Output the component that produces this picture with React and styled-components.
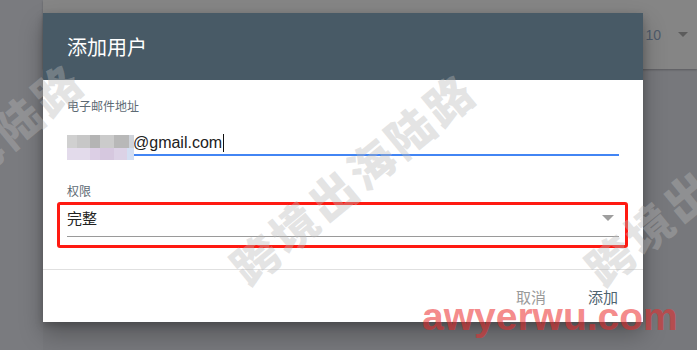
import styled, { createGlobalStyle } from 'styled-components';

const GlobalStyle = createGlobalStyle`
  html, body {
    margin: 0;
    padding: 0;
    background: #77787c;
  }
  * { box-sizing: border-box; }
`;

const CJK = `"Noto Sans CJK SC", "Liberation Sans", sans-serif`;

const Page = styled.div`
  position: relative;
  width: 697px;
  height: 350px;
  overflow: hidden;
  display: flex;
  background: #77787c;
  font-family: ${CJK};
`;

const LeftGutter = styled.div`
  width: 43px;
  flex-shrink: 0;
  background: #7a7b7f;
`;

const Content = styled.div`
  flex: 1;
  display: flex;
  flex-direction: column;
`;

const TableBar = styled.div`
  height: 69px;
  background: #858585;
  box-shadow: 0 1px 2px rgba(0, 0, 0, 0.25);
  display: flex;
  align-items: center;
  justify-content: flex-end;
  padding-right: 9px;
  gap: 17px;
  font-family: "Liberation Sans", Arial, sans-serif;
  font-size: 14px;
  color: #4e5a6a;
`;

const Caret = styled.span`
  width: 0;
  height: 0;
  border-left: ${p => p.$w / 2}px solid transparent;
  border-right: ${p => p.$w / 2}px solid transparent;
  border-top: ${p => p.$h}px solid ${p => p.$color};
`;

const Dialog = styled.div`
  position: absolute;
  left: 43px;
  top: 13px;
  width: 600px;
  background: #fff;
  box-shadow: 0 12px 22px rgba(0, 0, 0, 0.28), 0 3px 8px rgba(0, 0, 0, 0.2);
`;

const Header = styled.div`
  height: 67px;
  background: #485a66;
  color: #fff;
  font-size: 20px;
  display: flex;
  align-items: center;
  padding-left: 24px;
`;

const Body = styled.div`
  padding: 18px 24px 32px;
  border-bottom: 1px solid #e0e0e0;
`;

const Label = styled.div`
  font-size: 12px;
  line-height: 16px;
  color: #5d6a74;
  margin-top: ${p => p.$top || 0}px;
`;

const EmailField = styled.div`
  position: relative;
  margin-top: 19px;
  padding: 0 0 1px 66px;
  line-height: 20px;
  font-family: "Liberation Sans", Arial, sans-serif;
  font-size: 16px;
  color: #212121;
  border-bottom: 2px solid #4285f4;
  display: flex;
  align-items: center;
`;

const Mosaic = styled.span`
  position: absolute;
  left: 0;
  top: 2px;
  width: 67px;
  height: 25px;
  background:
    linear-gradient(to right,
      #d0d0d0 0 10px, #c7c7c7 10px 23px, #b4b4b4 23px 33px,
      #cbcbcb 33px 47px, #b8b8b8 47px 62px, #cfd3da 62px) top / 100% 13px no-repeat,
    linear-gradient(to right,
      #e3dbeb 0 23px, #dccfe5 23px 33px, #d6c8df 33px 47px,
      #dcd2e6 47px 60px, #d3def2 60px) bottom / 100% 12px no-repeat;
`;

const Cursor = styled.span`
  width: 1px;
  height: 18px;
  margin-left: 1px;
  background: #111;
`;

const SelectField = styled.div`
  position: relative;
  margin-top: 9px;
  padding-bottom: 8px;
  border-bottom: 1px solid #9a9a9a;
  display: flex;
  align-items: center;
  justify-content: space-between;
  padding-right: 5px;
  font-size: 15px;
  line-height: 20px;
  color: #222;
`;

const Highlight = styled.div`
  position: absolute;
  left: -10px;
  right: -9px;
  top: -6px;
  bottom: -12px;
  border: 3px solid #ff1a12;
  border-radius: 3px;
  pointer-events: none;
`;

const Actions = styled.div`
  height: 52px;
  display: flex;
  align-items: center;
  justify-content: flex-end;
  gap: 42px;
  padding-right: 25px;
`;

const ActionButton = styled.button`
  border: 0;
  background: none;
  padding: 0;
  font-family: ${CJK};
  font-size: 15px;
  color: ${p => (p.$primary ? '#4f6470' : '#9a9a9a')};
  cursor: pointer;
`;

const Watermarks = styled.div`
  position: absolute;
  inset: 0;
  pointer-events: none;
`;

const Stamp = styled.span`
  position: absolute;
  left: ${p => p.$x}px;
  top: ${p => p.$y}px;
  transform: translate(-50%, -50%) rotate(-39.5deg);
  white-space: nowrap;
  font-family: ${CJK};
  font-weight: 900;
  font-size: 46px;
  line-height: 46px;
  letter-spacing: 4px;
  color: rgba(184, 184, 184, 0.38);
`;

const SiteMark = styled.span`
  position: absolute;
  left: 422px;
  top: 297px;
  font-family: "Liberation Sans", Arial, sans-serif;
  font-weight: 700;
  font-size: 39px;
  line-height: 39px;
  color: rgba(236, 40, 40, 0.55);
  white-space: nowrap;
`;

const stamps = [
  { x: -40, y: 167 },
  { x: 352, y: 177 },
  { x: 707, y: 178 },
];

export default function App() {
  return (
    <>
      <GlobalStyle />
      <Page>
        <LeftGutter />
        <Content>
          <TableBar>
            <span>10</span>
            <Caret $w={11} $h={5} $color="#5c5c5c" />
          </TableBar>
        </Content>

        <Dialog>
          <Header>添加用户</Header>
          <Body>
            <Label>电子邮件地址</Label>
            <EmailField>
              <Mosaic />
              @gmail.com
              <Cursor />
            </EmailField>

            <Label $top={27}>权限</Label>
            <SelectField>
              <span>完整</span>
              <Caret $w={12} $h={6} $color="#9e9e9e" />
              <Highlight />
            </SelectField>
          </Body>
          <Actions>
            <ActionButton>取消</ActionButton>
            <ActionButton $primary>添加</ActionButton>
          </Actions>
        </Dialog>

        <Watermarks>
          {stamps.map((s, i) => (
            <Stamp key={i} $x={s.x} $y={s.y}>跨境出海陆路</Stamp>
          ))}
          <SiteMark>awyerwu.com</SiteMark>
        </Watermarks>
      </Page>
    </>
  );
}
